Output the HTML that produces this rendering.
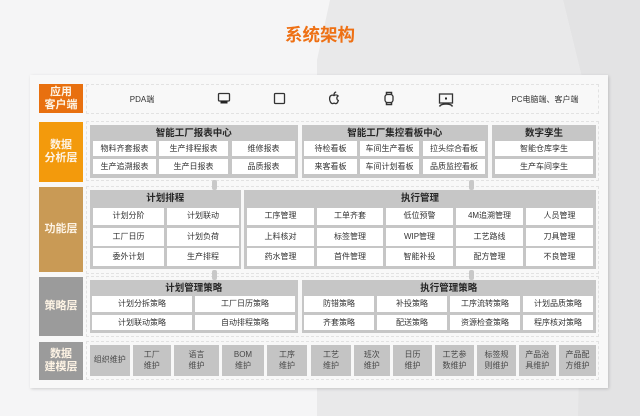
<!DOCTYPE html>
<html lang="zh"><head><meta charset="utf-8">
<style>
html,body{margin:0;padding:0;width:640px;height:416px;overflow:hidden;background:#f5f5f6}
#r{position:relative;width:640px;height:416px;overflow:hidden;font-family:"Liberation Sans","Noto Sans CJK SC",sans-serif;filter:blur(.35px)}
#r div{position:absolute;box-sizing:border-box;display:flex;align-items:center;justify-content:center;text-align:center}
.l{left:39px;width:44px;color:#fdf3e4;font-size:11px;font-weight:700;line-height:13px}
.d{left:86px;width:513px;border:1px dashed #e2e2e2}
.p{background:#c6c6c6;color:#262626;font-size:9.5px;font-weight:700;align-items:flex-start!important;line-height:16px;padding-top:1px}
.c{background:#fff;color:#333;font-size:8px;line-height:10px}
.m{background:#c4c4c4;color:#484848;font-size:8px;line-height:10.5px;top:345px;height:31px}
.a{width:5px;height:10px;background:#c8c8c8;border-radius:2px}
svg{position:absolute;fill:none;stroke:#333;stroke-width:1.3}
</style></head><body>
<div id="r">
<svg style="left:0;top:0;stroke:none" width="640" height="416"><polygon points="330,0 563,0 585,90 585,416 317,416 317,60" fill="#e9e9ea"/><polygon points="563,0 640,0 640,416 578,416 585,90" fill="#e3e3e4"/></svg>
<div style="left:240px;top:22px;width:160px;height:24px;color:#ee7014;font-size:17.5px;font-weight:700">系统架构</div>
<div style="left:30px;top:75px;width:578px;height:313px;background:#f8f8f8;box-shadow:1px 1px 3px rgba(0,0,0,.16)"></div>

<div class="l" style="top:84px;height:29px;background:#e8700f">应用<br>客户端</div>
<div class="l" style="top:122px;height:60px;background:#f39a0c">数据<br>分析层</div>
<div class="l" style="top:187px;height:85px;background:#c99a55">功能层</div>
<div class="l" style="top:277px;height:59px;background:#9b9b9b">策略层</div>
<div class="l" style="top:342px;height:38px;background:#9b9b9b">数据<br>建模层</div>

<div class="d" style="top:84px;height:30px"></div>
<div class="d" style="top:121px;height:60px"></div>
<div class="d" style="top:186px;height:88px"></div>
<div class="d" style="top:276px;height:61px"></div>
<div class="d" style="top:341px;height:39px"></div>

<div style="left:110px;top:92px;width:64px;height:14px;font-size:8px;color:#333">PDA端</div>
<div style="left:500px;top:92px;width:90px;height:14px;font-size:8px;color:#333">PC电脑端、客户端</div>
<svg style="left:217px;top:92px" width="14" height="13" viewBox="0 0 14 13"><rect x="1.5" y="1.500" width="11" height="7.500" rx="1"/><rect x="3.500" y="9" width="7" height="2.500" fill="#222" stroke="none"/></svg>
<svg style="left:273px;top:92px" width="13" height="13" viewBox="0 0 13 13"><rect x="1.500" y="1.500" width="10" height="10" rx="1"/></svg>
<svg style="left:328px;top:91px" width="12" height="14" viewBox="0 0 12 14"><path d="M6 4.600C4.800 3.800 2 3.800 1.600 7c-.3 2.600 1.400 5.600 2.800 5.600.8 0 1-.4 1.700-.4s.9.4 1.700.4c1 0 2-1.500 2.500-3.100-1.800-.8-2-3.600-.2-4.600C9 3.700 7.200 3.800 6 4.600zM6 3.800C6 2.500 6.800 1.300 8.200 1"/></svg>
<svg style="left:383px;top:91px" width="12" height="15" viewBox="0 0 12 15"><rect x="2" y="3.500" width="8" height="8" rx="2.500"/><path d="M3.500 3.500V1.500h5v2M3.500 11.500v2h5v-2" stroke-width="1.500"/></svg>
<svg style="left:438px;top:93px" width="16" height="15" viewBox="0 0 16 15"><rect x="1.500" y="1" width="13" height="9"/><rect x="7" y="4.500" width="2" height="2" fill="#222" stroke="none"/><path d="M1.500 13.500c1-2 3-2.500 6.500-2.500s5.500.5 6.500 2.500" stroke-width="1.500"/></svg>

<div class="p" style="left:89.500px;top:125px;width:208.500px;height:53px">智能工厂报表中心</div>
<div class="c" style="left:93px;top:141px;width:63px;height:15px">物料齐套报表</div>
<div class="c" style="left:159px;top:141px;width:69px;height:15px">生产排程报表</div>
<div class="c" style="left:232px;top:141px;width:63px;height:15px">维修报表</div>
<div class="c" style="left:93px;top:159px;width:63px;height:15px">生产追溯报表</div>
<div class="c" style="left:159px;top:159px;width:69px;height:15px">生产日报表</div>
<div class="c" style="left:232px;top:159px;width:63px;height:15px">品质报表</div>

<div class="p" style="left:301.500px;top:125px;width:186.500px;height:53px">智能工厂集控看板中心</div>
<div class="c" style="left:304px;top:141px;width:53px;height:15px">待检看板</div>
<div class="c" style="left:360px;top:141px;width:59px;height:15px">车间生产看板</div>
<div class="c" style="left:423px;top:141px;width:62px;height:15px">拉头综合看板</div>
<div class="c" style="left:304px;top:159px;width:53px;height:15px">来客看板</div>
<div class="c" style="left:360px;top:159px;width:59px;height:15px">车间计划看板</div>
<div class="c" style="left:423px;top:159px;width:62px;height:15px">品质监控看板</div>

<div class="p" style="left:492px;top:125px;width:104px;height:53px">数字孪生</div>
<div class="c" style="left:495px;top:141px;width:98px;height:15px">智能仓库孪生</div>
<div class="c" style="left:495px;top:159px;width:98px;height:15px">生产车间孪生</div>

<div class="a" style="left:212px;top:180px"></div>
<div class="a" style="left:469px;top:180px"></div>

<div class="p" style="left:89.500px;top:190px;width:151.500px;height:79px">计划排程</div>
<div class="c" style="left:93px;top:207.500px;width:71px;height:17.500px">计划分阶</div>
<div class="c" style="left:167px;top:207.500px;width:72px;height:17.500px">计划联动</div>
<div class="c" style="left:93px;top:228px;width:71px;height:17.500px">工厂日历</div>
<div class="c" style="left:167px;top:228px;width:72px;height:17.500px">计划负荷</div>
<div class="c" style="left:93px;top:248px;width:71px;height:17.500px">委外计划</div>
<div class="c" style="left:167px;top:248px;width:72px;height:17.500px">生产排程</div>

<div class="p" style="left:244px;top:190px;width:352px;height:79px">执行管理</div>
<div class="c" style="left:247px;top:207.500px;width:67px;height:17.500px">工序管理</div>
<div class="c" style="left:317px;top:207.500px;width:66px;height:17.500px">工单齐套</div>
<div class="c" style="left:386px;top:207.500px;width:67px;height:17.500px">低位预警</div>
<div class="c" style="left:456px;top:207.500px;width:67px;height:17.500px">4M追溯管理</div>
<div class="c" style="left:526px;top:207.500px;width:67px;height:17.500px">人员管理</div>
<div class="c" style="left:247px;top:228px;width:67px;height:17.500px">上料核对</div>
<div class="c" style="left:317px;top:228px;width:66px;height:17.500px">标签管理</div>
<div class="c" style="left:386px;top:228px;width:67px;height:17.500px">WIP管理</div>
<div class="c" style="left:456px;top:228px;width:67px;height:17.500px">工艺路线</div>
<div class="c" style="left:526px;top:228px;width:67px;height:17.500px">刀具管理</div>
<div class="c" style="left:247px;top:248px;width:67px;height:17.500px">药水管理</div>
<div class="c" style="left:317px;top:248px;width:66px;height:17.500px">首件管理</div>
<div class="c" style="left:386px;top:248px;width:67px;height:17.500px">智能补投</div>
<div class="c" style="left:456px;top:248px;width:67px;height:17.500px">配方管理</div>
<div class="c" style="left:526px;top:248px;width:67px;height:17.500px">不良管理</div>

<div class="a" style="left:212px;top:270px"></div>
<div class="a" style="left:469px;top:270px"></div>

<div class="p" style="left:89.500px;top:280px;width:208.500px;height:53px">计划管理策略</div>
<div class="c" style="left:92px;top:296px;width:100px;height:16px">计划分拆策略</div>
<div class="c" style="left:195px;top:296px;width:100px;height:16px">工厂日历策略</div>
<div class="c" style="left:92px;top:315px;width:100px;height:15px">计划联动策略</div>
<div class="c" style="left:195px;top:315px;width:100px;height:15px">自动排程策略</div>

<div class="p" style="left:301.500px;top:280px;width:294.500px;height:53px">执行管理策略</div>
<div class="c" style="left:304px;top:296px;width:70px;height:16px">防错策略</div>
<div class="c" style="left:377px;top:296px;width:70px;height:16px">补投策略</div>
<div class="c" style="left:450px;top:296px;width:70px;height:16px">工序流转策略</div>
<div class="c" style="left:523px;top:296px;width:70px;height:16px">计划品质策略</div>
<div class="c" style="left:304px;top:315px;width:70px;height:15px">齐套策略</div>
<div class="c" style="left:377px;top:315px;width:70px;height:15px">配送策略</div>
<div class="c" style="left:450px;top:315px;width:70px;height:15px">资源检查策略</div>
<div class="c" style="left:523px;top:315px;width:70px;height:15px">程序核对策略</div>

<div class="m" style="left:89.500px;width:40.500px">组织维护</div>
<div class="m" style="left:132.500px;width:38.500px">工厂<br>维护</div>
<div class="m" style="left:174px;width:45px">语言<br>维护</div>
<div class="m" style="left:222px;width:42px">BOM<br>维护</div>
<div class="m" style="left:267px;width:40px">工序<br>维护</div>
<div class="m" style="left:311px;width:40px">工艺<br>维护</div>
<div class="m" style="left:353.500px;width:36.500px">班次<br>维护</div>
<div class="m" style="left:393px;width:39px">日历<br>维护</div>
<div class="m" style="left:435px;width:39px">工艺参<br>数维护</div>
<div class="m" style="left:477px;width:39px">标签规<br>则维护</div>
<div class="m" style="left:518.500px;width:37.500px">产品治<br>具维护</div>
<div class="m" style="left:559px;width:37px">产品配<br>方维护</div>
</div>
</body></html>
